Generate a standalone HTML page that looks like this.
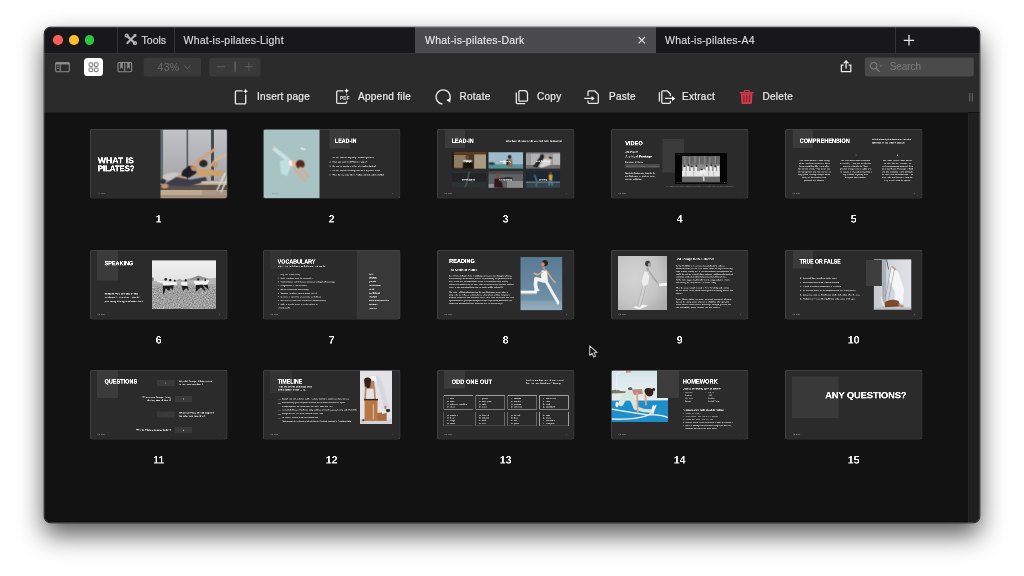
<!DOCTYPE html>
<html lang="en">
<head>
<meta charset="utf-8">
<title>What-is-pilates-Dark</title>
<style>
*{box-sizing:border-box;margin:0;padding:0}
html,body{width:1024px;height:576px;overflow:hidden;background:#fff}
body{font-family:"Liberation Sans",sans-serif;position:relative;color:#e4e4e4}
.win{position:absolute;left:44px;top:27px;width:936px;height:496px;border-radius:7px;will-change:transform;background:#121212;
 box-shadow:0 0 0 .5px rgba(0,0,0,.5),0 12px 26px rgba(0,0,0,.65),0 0 4px rgba(0,0,0,.1);}
.clip{position:absolute;inset:0;border-radius:7px;overflow:hidden}
.edge{position:absolute;inset:0;border-radius:7px;box-shadow:inset 0 0 0 .7px rgba(255,255,255,.2);pointer-events:none}
.titlebar{position:absolute;left:0;top:0;width:936px;height:25.6px;background:#18171c}
.tl{position:absolute;top:8.2px;width:9.7px;height:9.7px;border-radius:50%}
.vdiv{position:absolute;top:0;width:1px;height:26px;background:#343437}
.tabtxt{position:absolute;top:7px;-webkit-text-stroke:.15px #dcdcdc;font-size:10.5px;letter-spacing:.22px;color:#dcdcdc;white-space:nowrap;line-height:12px}
.tabactive{position:absolute;left:370.6px;top:0;width:241px;height:26.2px;background:#4b4b4e}
.toolbar{position:absolute;left:0;top:25.6px;width:936px;height:59.9px;background:#2b2b2b;border-top:1px solid #343434}
.tbtn{position:absolute;font-size:10px;letter-spacing:.27px;color:#ececec;white-space:nowrap;line-height:12px;top:64.2px;-webkit-text-stroke:.2px #ececec}
.tinytxt{position:absolute;font-size:4.6px;font-weight:700;color:#e6e6e6;line-height:5px;letter-spacing:.1px;background:#2b2b2b;padding:0 .3px}
.ztxt{position:absolute;font-size:10.5px;color:#6c6c6c;line-height:12px;letter-spacing:.3px}
.stxt{position:absolute;font-size:10px;color:#7c7c7c;line-height:12px;letter-spacing:-.1px}
.content{position:absolute;left:0;top:85px;width:924px;height:411px;background:linear-gradient(#2b2b2b,#2b2b2b) 0 0/100% .5px no-repeat #121212}
.gutter{position:absolute;left:924px;top:85.5px;width:12px;height:411px;background:#1f1f1f;border-left:1px solid #262626}
.thumb{position:absolute;width:560px;height:400px;overflow:hidden;transform:scale(.25);transform-origin:0 0;will-change:transform}
.thumb svg.sl{display:block;text-rendering:geometricPrecision}
</style>
</head>
<body>
<div class="win">
<div class="clip">
 <div class="titlebar">
  <div class="tl" style="left:9.3px;background:#fd5f57"></div>
  <div class="tl" style="left:25px;background:#febc2e"></div>
  <div class="tl" style="left:40.8px;background:#28c840"></div>
  <div class="vdiv" style="left:73px"></div>
  <div class="tabtxt" style="left:97.6px;letter-spacing:0">Tools</div>
  <div class="vdiv" style="left:130px"></div>
  <div class="tabtxt" style="left:139.5px">What-is-pilates-Light</div>
  <div class="tabactive"></div>
  <div class="tabtxt" style="left:381px;color:#f0f0f0">What-is-pilates-Dark</div>
  <div class="tabtxt" style="left:621px">What-is-pilates-A4</div>
  <div class="vdiv" style="left:851px"></div>
 </div>
 <div class="toolbar"></div>
 <div class="tbtn" style="left:213px">Insert page</div>
 <div class="tbtn" style="left:314px">Append file</div>
 <div class="tbtn" style="left:415.5px">Rotate</div>
 <div class="tbtn" style="left:493px">Copy</div>
 <div class="tbtn" style="left:565px">Paste</div>
 <div class="tbtn" style="left:638px">Extract</div>
 <div class="tbtn" style="left:718.5px">Delete</div>
<svg style="position:absolute;left:0;top:0" width="936" height="90" viewBox="44 27 936 90" fill="none">
 <!-- tools icon -->
 <g stroke="#b4b4b6" stroke-linecap="round">
  <path d="M127.3 36.2 L134.6 43" stroke-width="2.3"/>
  <path d="M134.9 35.6 L127.4 42.9" stroke-width="2.1"/>
  <circle cx="126.7" cy="35.7" r="1.5" stroke-width="1.2"/>
  <circle cx="135" cy="43.2" r="1.5" stroke-width="1.2"/>
  <path d="M133.8 34.8 L136 34.4 L135.7 36.6" stroke-width="1"/>
 </g>
 <!-- tab close -->
 <path d="M638.6 37 L645 43.4 M645 37 L638.6 43.4" stroke="#dedede" stroke-width="1.15"/>
 <!-- plus -->
 <path d="M903.8 40.3 H914.2 M909 35.1 V45.5" stroke="#e6e6e6" stroke-width="1.3"/>
 <!-- sidebar icon -->
 <g stroke="#8b8b8b">
  <rect x="55.7" y="62.5" width="13.6" height="9.2" rx="1" stroke-width="1.1"/>
  <path d="M55.7 63.6 H69.3" stroke-width="1.6"/>
  <path d="M60.2 63 V71.5" stroke-width="1.1"/>
  <path d="M57 66.2 H59 M57 68.3 H59" stroke-width=".8"/>
 </g>
 <!-- grid button -->
 <rect x="84" y="58" width="19" height="18" rx="3.6" fill="#fff"/>
 <g stroke="#707070" stroke-width="1">
  <rect x="89.1" y="62.8" width="3.6" height="3.6" rx=".6"/>
  <rect x="94.4" y="62.8" width="3.6" height="3.6" rx=".6"/>
  <rect x="89.1" y="68" width="3.6" height="3.6" rx=".6"/>
  <rect x="94.4" y="68" width="3.6" height="3.6" rx=".6"/>
 </g>
 <!-- book icon -->
 <g stroke="#8b8b8b" stroke-width="1.1">
  <rect x="118" y="62.5" width="13.6" height="9.2" rx="1"/>
  <path d="M124.8 62.5 V71.7"/>
  <path d="M120.3 63 V68.5 L121.4 67.6 L122.5 68.5 V63 Z" fill="#8b8b8b" stroke-width=".5"/>
  <path d="M127.3 63 V68.5 L128.4 67.6 L129.5 68.5 V63 Z" fill="#8b8b8b" stroke-width=".5"/>
 </g>
 <!-- zoom box -->
 <rect x="143.7" y="57.8" width="57.4" height="18.6" rx="2.5" fill="#393939"/>
 <path d="M184.5 65.6 L187.3 68.8 L190.1 65.6" stroke="#626262" stroke-width="1"/>
 <rect x="209.3" y="57.8" width="51.2" height="18.6" rx="2.5" fill="#393939"/>
 <path d="M216.8 66.6 H225 M244.7 66.6 H252.9 M248.8 62.5 V70.7" stroke="#565656" stroke-width="1.1"/>
 <path d="M235.1 61.6 V71.8" stroke="#6c6c6c" stroke-width="1.1"/>
 <!-- share -->
 <g stroke="#ededed" stroke-width="1.25">
  <path d="M843.6 65 H841.4 V71.7 H850.8 V65 H848.6"/>
  <path d="M846.1 68.6 V61.2 M843.7 63.4 L846.1 61 L848.5 63.4"/>
 </g>
 <!-- search -->
 <rect x="864.8" y="57.6" width="109" height="19" rx="3" fill="#4a4a4a"/>
 <circle cx="873.7" cy="65.8" r="3.4" stroke="#858585" stroke-width="1"/>
 <path d="M876.2 68.4 L879.6 71.8" stroke="#858585" stroke-width="1.1"/>
 <path d="M879.6 65 L881 66.4 L882.4 65" stroke="#858585" stroke-width=".8"/>
 <!-- grip -->
 <path d="M969.7 93 V101.5 M972.3 93 V101.5" stroke="#777" stroke-width=".8"/>
 <!-- insert page -->
 <g stroke="#ececec" stroke-width="1.3" stroke-linejoin="round">
  <path d="M242.6 90.9 H236.4 Q235.4 90.9 235.4 91.9 V102.9 Q235.4 103.9 236.4 103.9 H244.7 Q245.7 103.9 245.7 102.9 V94.6"/>
  <path d="M245.6 88.6 L246.3 90.5 L248.2 91.2 L246.3 91.9 L245.6 93.8 L244.9 91.9 L243 91.2 L244.9 90.5 Z" fill="#fff" stroke="none"/>
 </g>
 <!-- append file -->
 <g stroke="#e4e4e4" stroke-width="1.3" stroke-linejoin="round">
  <path d="M343.4 90.8 H337.7 Q336.7 90.8 336.7 91.8 V102.3 Q336.7 103.3 337.7 103.3 H345.6 Q346.6 103.3 346.6 102.3 V101.2"/>
  <path d="M346.6 88.2 L347.3 90.1 L349.2 90.8 L347.3 91.5 L346.6 93.4 L345.9 91.5 L344 90.8 L345.9 90.1 Z" fill="#fff" stroke="none"/>
  <path d="M346.6 94.2 V95.4" stroke-width="1"/>
 </g>
 <!-- rotate -->
 <g stroke="#ececec" stroke-width="1.35" stroke-linecap="butt">
  <path d="M442.4 104 A7.1 7.1 0 1 1 449.2 100.6"/>
  <path d="M446.3 100 L450.3 102.8 L450.4 98.2 Z" fill="#fff" stroke="none"/>
 </g>
 <!-- copy -->
 <g stroke="#e8e8e8" stroke-width="1.3" stroke-linejoin="round">
  <path d="M519.9 90.6 H524.6 Q527.4 90.9 527.5 93.6 V100.2 Q527.5 101.2 526.5 101.2 H519.9 Q518.9 101.2 518.9 100.2 V91.6 Q518.9 90.6 519.9 90.6 Z"/>
  <path d="M516.3 92.6 V102.6 Q516.3 103.6 517.3 103.6 H525.2"/>
 </g>
 <!-- paste -->
 <g stroke="#e8e8e8" stroke-width="1.3" stroke-linejoin="round">
  <path d="M588 96 V91.8 Q588 90.8 589 90.8 H594.6 L598.3 94.4 V102.3 Q598.3 103.3 597.3 103.3 H589 Q588 103.3 588 102.3 V100.6"/>
  <path d="M584.2 98.4 H592.5"/>
  <path d="M591.6 96 L594.7 98.4 L591.6 100.8 Z" fill="#fff" stroke="none"/>
 </g>
 <!-- extract -->
 <g stroke="#e8e8e8" stroke-width="1.3" stroke-linejoin="round">
  <path d="M659.4 92.2 V101.6"/>
  <path d="M670.4 96 V94 L667.1 90.8 H662.8 Q661.8 90.8 661.8 91.8 V102.3 Q661.8 103.3 662.8 103.3 H669.4 Q670.4 103.3 670.4 102.3 V100.8"/>
  <path d="M665 98.4 H673"/>
  <path d="M672 95.9 L675.3 98.4 L672 100.9 Z" fill="#fff" stroke="none"/>
 </g>
 <!-- delete -->
 <g fill="#cf3a4b">
  <rect x="739.8" y="91.9" width="13.8" height="1.5" rx=".4"/>
  <path d="M743.9 92 V91 Q743.9 90 744.9 90 H748.9 Q749.9 90 749.9 91 V92 H748.7 V91.1 H745.1 V92 Z"/>
  <path d="M740.9 93.6 H752.4 L751.9 103 Q751.8 103.9 750.9 103.9 H742.4 Q741.5 103.9 741.4 103 Z"/>
  <path d="M743.9 95.2 V102.2 M746.65 95.2 V102.2 M749.4 95.2 V102.2" stroke="#7a1f2c" stroke-width="1.1"/>
 </g>
</svg>
<div class="tinytxt" style="left:295.8px;top:69.1px">PDF</div>
<div class="ztxt" style="left:113.5px;top:33.6px">43%</div>
<div class="stxt" style="left:845.8px;top:34.2px">Search</div>
 <div class="content" id="content">
<svg width="0" height="0" style="position:absolute"><defs><filter id="bl1" x="-10%" y="-10%" width="120%" height="120%"><feGaussianBlur stdDeviation="1.1"/></filter><filter id="bl2" x="-10%" y="-10%" width="120%" height="120%"><feGaussianBlur stdDeviation="2"/></filter><filter id="bl3" x="-10%" y="-10%" width="120%" height="120%"><feGaussianBlur stdDeviation="4.5"/></filter><clipPath id="cp"><rect x="0" y="0" width="549.2" height="277.6" rx="8"/></clipPath></defs></svg>
<div class="thumb" style="left:45.50px;top:17.05px"><svg class="sl" width="560" height="400" viewBox="0 0 560 400" font-family="Liberation Sans, sans-serif"><g clip-path="url(#cp)"><rect x="0.0" y="0.0" width="552.0" height="280.0" fill="#2b2b2b"/><svg x="282.0" y="0.0" width="270.0" height="280.0" viewBox="35 30 485 500" preserveAspectRatio="none" overflow="hidden"><defs><linearGradient id="g1a" x1="0" y1="0" x2="0" y2="1"><stop offset="0" stop-color="#c0c3c7"/><stop offset=".7" stop-color="#a9a9ab"/><stop offset="1" stop-color="#9c968f"/></linearGradient></defs>
<rect x="35" y="30" width="485" height="500" fill="url(#g1a)"/>
<rect x="35" y="30" width="20" height="370" fill="#666c73"/><ellipse cx="130" cy="372" rx="80" ry="30" fill="#c9c7c3" filter="url(#bl3)"/>
<rect x="222" y="30" width="13" height="370" fill="#555c63"/>
<rect x="396" y="30" width="22" height="370" fill="#434a52"/>
<rect x="35" y="398" width="485" height="132" fill="#ab9884"/>
<rect x="35" y="432" width="485" height="34" fill="#5a514a"/>
<rect x="35" y="466" width="300" height="34" fill="#c0ab92"/>
<rect x="35" y="500" width="485" height="30" fill="#a28d78"/>
<g filter="url(#bl3)">
<path d="M420 178 L300 262 L262 300" stroke="#d6a07e" stroke-width="20" stroke-linecap="round" fill="none"/>
<path d="M500 212 L420 262 L390 300" stroke="#e0b28e" stroke-width="15" stroke-linecap="round" fill="none"/>
<ellipse cx="428" cy="283" rx="20" ry="22" fill="#c39872"/>
<path d="M300 318 L400 318 L500 338 L500 362 L300 368 Z" fill="#cfa069"/>
<ellipse cx="343" cy="276" rx="30" ry="26" fill="#2c2622"/>
<path d="M196 326 L240 292 L300 300 L292 346 L240 378 L180 366 Z" fill="#1b1c20"/><path d="M250 300 L300 296 L296 330 L262 326 Z" fill="#c8916f"/>
<path d="M165 352 L235 392 L215 410 L150 392 Z" fill="#c99a7c"/>
<path d="M150 372 L250 392 L360 372 L370 400 L240 440 L110 436 L70 420 Z" fill="#3a3e49"/>
<ellipse cx="66" cy="440" rx="26" ry="14" fill="#c79474"/>
<ellipse cx="52" cy="405" rx="22" ry="18" fill="#30333b"/>
<path d="M440 470 L500 345 M470 480 L520 370" stroke="#e8e6e2" stroke-width="10" fill="none"/>
<rect x="330" y="405" width="190" height="14" fill="#d8cfc2"/>
</g></svg><text x="31.2" y="137.4" font-size="33" font-weight="700" fill="#fff" textLength="144.0" lengthAdjust="spacingAndGlyphs" stroke="#fff" stroke-width="1.4">WHAT IS</text><text x="31.2" y="168.6" font-size="33" font-weight="700" fill="#fff" textLength="147.0" lengthAdjust="spacingAndGlyphs" stroke="#fff" stroke-width="1.4">PILATES?</text><text x="31.0" y="260.0" font-size="5" font-weight="400" fill="#bdbdbd" textLength="28.0" lengthAdjust="spacingAndGlyphs">ESL Brains</text></g><rect x="1.3" y="1.3" width="546.6" height="275.0" rx="7" fill="none" stroke="#474747" stroke-width="2.6"/><text x="274.6" y="373.6" font-size="42.5" font-weight="700" fill="#f4f4f4" text-anchor="middle">1</text></svg></div>
<div class="thumb" style="left:218.75px;top:17.05px"><svg class="sl" width="560" height="400" viewBox="0 0 560 400" font-family="Liberation Sans, sans-serif"><g clip-path="url(#cp)"><rect x="0.0" y="0.0" width="552.0" height="280.0" fill="#2b2b2b"/><rect x="266.0" y="0.0" width="82.0" height="78.0" fill="#3b3b3b"/><svg x="0.0" y="0.0" width="226.0" height="280.0" viewBox="45 48 385 475" preserveAspectRatio="none" overflow="hidden"><rect x="45" y="48" width="390" height="480" fill="#a8c3c3"/>
<g filter="url(#bl3)">
<path d="M118 180 L190 237 L228 268" stroke="#c6e4e4" stroke-width="27" stroke-linecap="round" fill="none"/>
<ellipse cx="110" cy="176" rx="10" ry="7" fill="#e0a890"/>
<path d="M158 268 L215 246 L238 300 L208 368 L168 350 Z" fill="#bfe0e0"/>
<path d="M215 258 L270 262 L285 300 L230 312 Z" fill="#e6b9a0"/>
<rect x="222" y="262" width="20" height="36" fill="#f2f4f4" transform="rotate(-12 232 280)"/>
<ellipse cx="298" cy="287" rx="31" ry="29" fill="#54291f"/>
<path d="M300 312 L350 368 M262 322 L330 398" stroke="#e0a88c" stroke-width="15" stroke-linecap="round" fill="none"/>
<path d="M300 172 L340 180 L334 194 L296 186 Z" fill="#eef3f3" stroke="#8da4a4" stroke-width="3"/>
</g></svg><text x="288.0" y="55.0" font-size="24" font-weight="700" fill="#fff" textLength="86.0" lengthAdjust="spacingAndGlyphs" stroke="#fff" stroke-width="1.1" stroke-linejoin="round">LEAD-IN</text><text x="266.0" y="116.5" font-size="7.5" font-weight="700" fill="#e9e9e9">1.</text><text x="266.0" y="133.9" font-size="7.5" font-weight="700" fill="#e9e9e9">2.</text><text x="266.0" y="151.3" font-size="7.5" font-weight="700" fill="#e9e9e9">3.</text><text x="266.0" y="168.7" font-size="7.5" font-weight="700" fill="#e9e9e9">4.</text><text x="266.0" y="186.1" font-size="7.5" font-weight="700" fill="#e9e9e9">5.</text><text x="278.0" y="116.5" font-size="7.5" font-weight="700" fill="#e9e9e9" textLength="165.0" lengthAdjust="spacingAndGlyphs">Do you exercise regularly? What do you do?</text><text x="278.0" y="133.9" font-size="7.5" font-weight="700" fill="#e9e9e9" textLength="137.0" lengthAdjust="spacingAndGlyphs">Have you ever tried Pilates or yoga?</text><text x="278.0" y="151.3" font-size="7.5" font-weight="700" fill="#e9e9e9" textLength="175.0" lengthAdjust="spacingAndGlyphs">Do you do sports or other physical activities?</text><text x="278.0" y="168.7" font-size="7.5" font-weight="700" fill="#e9e9e9" textLength="190.0" lengthAdjust="spacingAndGlyphs">Do you enjoy exercising alone or in a group? Why?</text><text x="278.0" y="186.1" font-size="7.5" font-weight="700" fill="#e9e9e9" textLength="206.0" lengthAdjust="spacingAndGlyphs">What do you know about Pilates and its health benefits?</text><text x="36.0" y="259.0" font-size="5" font-weight="400" fill="#6d8585" textLength="27.0" lengthAdjust="spacingAndGlyphs">ESL Brains</text><text x="521.0" y="261.0" font-size="6" font-weight="400" fill="#cfcfcf" text-anchor="end">2</text></g><rect x="1.3" y="1.3" width="546.6" height="275.0" rx="7" fill="none" stroke="#474747" stroke-width="2.6"/><text x="274.6" y="373.6" font-size="42.5" font-weight="700" fill="#f4f4f4" text-anchor="middle">2</text></svg></div>
<div class="thumb" style="left:392.75px;top:17.05px"><svg class="sl" width="560" height="400" viewBox="0 0 560 400" font-family="Liberation Sans, sans-serif"><g clip-path="url(#cp)"><rect x="0.0" y="0.0" width="552.0" height="280.0" fill="#2b2b2b"/><rect x="32.0" y="0.0" width="80.0" height="76.0" fill="#3b3b3b"/><text x="58.6" y="55.0" font-size="24" font-weight="700" fill="#fff" textLength="88.0" lengthAdjust="spacingAndGlyphs" stroke="#fff" stroke-width="1.1" stroke-linejoin="round">LEAD-IN</text><text x="275.0" y="51.0" font-size="9.5" font-weight="700" fill="#fff" textLength="226.0" lengthAdjust="spacingAndGlyphs">What type of exercise do you find most appealing?</text><svg x="58.6" y="93.0" width="137.0" height="65.5" viewBox="0 0 136 66" preserveAspectRatio="none" overflow="hidden"><rect width="136" height="66" fill="#4a3624"/><rect x="10" y="12" width="46" height="50" fill="#8f7a62"/><rect x="90" y="8" width="46" height="58" fill="#ab9a82"/><rect x="0" y="0" width="136" height="9" fill="#5e3d1c"/><rect x="0" y="0" width="8" height="66" fill="#241a12"/><g filter="url(#bl2)"><path d="M44 66 L46 36 L62 28 L82 36 L86 66 Z" fill="#141210"/><ellipse cx="62" cy="20" rx="8" ry="9" fill="#6a4a36"/><rect x="46" y="32" width="34" height="6" fill="#e8e8e8"/></g></svg><text x="126.6" y="132.0" font-size="9.5" font-weight="700" fill="#fff" text-anchor="middle">yoga</text><svg x="206.0" y="93.0" width="137.0" height="65.5" viewBox="0 0 136 66" preserveAspectRatio="none" overflow="hidden"><rect width="136" height="66" fill="#9cbccc"/><rect y="52" width="136" height="14" fill="#4f9595"/><rect y="47" width="136" height="6" fill="#6f98a4"/><g filter="url(#bl2)"><ellipse cx="12" cy="46" rx="14" ry="6" fill="#2f3e48"/><ellipse cx="84" cy="19" rx="7" ry="8" fill="#2b201a"/><path d="M78 28 L94 28 L96 60 L80 60 Z" fill="#8a6a58"/><path d="M58 34 L78 32 L78 48 L60 46 Z" fill="#eaeaea"/><rect x="70" y="30" width="10" height="22" fill="#1b1b1f"/></g></svg><text x="274.0" y="132.0" font-size="9.5" font-weight="700" fill="#fff" text-anchor="middle">swimming</text><svg x="355.7" y="93.0" width="137.0" height="65.5" viewBox="0 0 136 66" preserveAspectRatio="none" overflow="hidden"><rect width="136" height="66" fill="#9a9a9c"/><rect x="20" y="4" width="36" height="46" fill="#b2b2b4"/><rect x="108" y="4" width="28" height="46" fill="#b6b6b8"/><rect x="0" y="0" width="136" height="5" fill="#6e6e70"/><rect y="52" width="136" height="14" fill="#6e6e70"/><g filter="url(#bl2)"><path d="M28 58 L56 18 L72 22 L46 62 Z" fill="#26262a"/><path d="M50 58 L74 26 L100 30 L96 52 L62 62 Z" fill="#d8d8d8"/><ellipse cx="64" cy="16" rx="8" ry="8" fill="#2a2420"/><ellipse cx="84" cy="20" rx="7" ry="7" fill="#caa98e"/><path d="M90 20 L104 24" stroke="#222" stroke-width="6"/></g></svg><text x="423.7" y="132.0" font-size="9.5" font-weight="700" fill="#fff" text-anchor="middle">weightlifting</text><svg x="58.6" y="169.3" width="137.0" height="65.5" viewBox="0 0 136 66" preserveAspectRatio="none" overflow="hidden"><rect width="136" height="66" fill="#222425"/><rect x="0" y="42" width="136" height="24" fill="#2e3132"/><rect x="0" y="0" width="136" height="8" fill="#2c3030"/><g filter="url(#bl2)"><path d="M70 2 L62 40 L54 64" stroke="#5a6062" stroke-width="5" fill="none"/><path d="M64 30 L84 44" stroke="#4b5052" stroke-width="4"/></g></svg><text x="126.6" y="206.4" font-size="9.5" font-weight="700" fill="#fff" text-anchor="middle">gymnastics</text><svg x="206.0" y="169.3" width="137.0" height="65.5" viewBox="0 0 136 66" preserveAspectRatio="none" overflow="hidden"><rect width="136" height="66" fill="#5e6062"/><rect x="0" y="0" width="136" height="12" fill="#46484a"/><rect x="74" y="40" width="62" height="26" fill="#8a8c8e"/><rect x="0" y="50" width="36" height="16" fill="#909294"/><g filter="url(#bl2)"><ellipse cx="36" cy="18" rx="8" ry="9" fill="#7a4f3c"/><path d="M24 30 L48 28 L58 66 L22 66 Z" fill="#33191f"/><path d="M44 34 L78 28 L92 30" stroke="#1d1d20" stroke-width="8" fill="none" stroke-linecap="round"/></g></svg><text x="274.0" y="206.4" font-size="9.5" font-weight="700" fill="#fff" text-anchor="middle">kickboxing</text><svg x="355.7" y="169.3" width="137.0" height="65.5" viewBox="0 0 136 66" preserveAspectRatio="none" overflow="hidden"><rect width="136" height="66" fill="#1b2832"/><rect x="0" y="46" width="136" height="20" fill="#34444f"/><rect x="0" y="41" width="136" height="5" fill="#64747d"/><g filter="url(#bl2)"><path d="M34 14 L44 42 L40 62" stroke="#4c6c7a" stroke-width="7" fill="none"/><ellipse cx="98" cy="8" rx="5" ry="6" fill="#6a4a38"/><path d="M90 14 L106 14 L104 36 L92 36 Z" fill="#d9a22e"/><path d="M94 36 L92 58 M102 36 L104 58" stroke="#5a8a9a" stroke-width="5"/></g></svg><text x="423.7" y="206.4" font-size="9.5" font-weight="700" fill="#fff" text-anchor="middle">cycling</text><text x="30.0" y="259.0" font-size="5" font-weight="400" fill="#bdbdbd" textLength="30.0" lengthAdjust="spacingAndGlyphs">ESL Brains</text><text x="521.0" y="261.0" font-size="6" font-weight="400" fill="#cfcfcf" text-anchor="end">3</text></g><rect x="1.3" y="1.3" width="546.6" height="275.0" rx="7" fill="none" stroke="#474747" stroke-width="2.6"/><text x="274.6" y="373.6" font-size="42.5" font-weight="700" fill="#f4f4f4" text-anchor="middle">3</text></svg></div>
<div class="thumb" style="left:566.95px;top:17.05px"><svg class="sl" width="560" height="400" viewBox="0 0 560 400" font-family="Liberation Sans, sans-serif"><g clip-path="url(#cp)"><rect x="0.0" y="0.0" width="552.0" height="280.0" fill="#2b2b2b"/><rect x="206.0" y="41.0" width="85.0" height="133.0" fill="#3b3b3b"/><text x="57.0" y="64.5" font-size="23" font-weight="700" fill="#fff" textLength="70.0" lengthAdjust="spacingAndGlyphs" stroke="#fff" stroke-width="1.1" stroke-linejoin="round">VIDEO</text><text x="57.0" y="96.0" font-size="12.5" font-weight="700" fill="#fff" textLength="52.0" lengthAdjust="spacingAndGlyphs">Joe Pilates</text><text x="57.0" y="113.5" font-size="12.5" font-weight="700" fill="#fff" textLength="106.0" lengthAdjust="spacingAndGlyphs">Archival Footage</text><text x="57.0" y="135.0" font-size="8" font-weight="700" fill="#f0f0f0" textLength="70.0" lengthAdjust="spacingAndGlyphs">Duration: 1:05 min</text><rect x="57.0" y="140.6" width="137.5" height="14.0" fill="#4b4b4b"/><text x="60.0" y="150.5" font-size="5.6" font-weight="400" fill="#8e8e8e" textLength="131.0" lengthAdjust="spacingAndGlyphs">www.youtube.com/watch?v=jyd8ucBdcPg</text><text x="57.0" y="178.5" font-size="8" font-weight="700" fill="#f2f2f2" textLength="121.0" lengthAdjust="spacingAndGlyphs">Watch the footage and describe the</text><text x="57.0" y="190.7" font-size="8" font-weight="700" fill="#f2f2f2" textLength="118.0" lengthAdjust="spacingAndGlyphs">way Pilates and his students move,</text><text x="57.0" y="202.9" font-size="8" font-weight="700" fill="#f2f2f2" textLength="68.0" lengthAdjust="spacingAndGlyphs">exercise, and behave.</text><rect x="255.0" y="96.7" width="208.0" height="122.3" fill="#050505"/><svg x="283.6" y="107.8" width="151.4" height="104.2" viewBox="0 0 152 104" preserveAspectRatio="none" overflow="hidden"><rect width="152" height="104" fill="#686868"/>
<g filter="url(#bl1)"><rect x="0" y="0" width="152" height="36" fill="#676767"/>
<path d="M12 0 V34 M30 4 V34 M52 0 V30 M70 6 V34 M92 0 V32 M112 4 V34 M134 0 V30" stroke="#868686" stroke-width="5"/>
<path d="M40 0 V20 M102 0 V24" stroke="#555" stroke-width="4"/>
<rect x="0" y="34" width="152" height="26" fill="#8e8e8e"/>
<path d="M10 40 V62 M24 38 V62 M40 42 V62 M56 40 V62 M100 40 V62 M116 38 V62 M132 42 V62 M146 40 V62" stroke="#ececec" stroke-width="9"/>
<path d="M10 36 a4.5 4.5 0 1 0 .1 0 M26 33 a4.5 4.5 0 1 0 .1 0 M40 37 a4.5 4.5 0 1 0 .1 0 M58 35 a4.5 4.5 0 1 0 .1 0 M100 35 a4.5 4.5 0 1 0 .1 0 M118 33 a4.5 4.5 0 1 0 .1 0 M134 37 a4.5 4.5 0 1 0 .1 0" fill="#353535"/>
<rect x="0" y="60" width="152" height="22" fill="#e6e6e6"/>
<path d="M16 62 V80 M48 62 V80 M108 62 V80 M128 62 V80" stroke="#a8a8a8" stroke-width="3"/>
<ellipse cx="84" cy="62" rx="11" ry="10" fill="#f0f0f0"/><ellipse cx="80" cy="54" rx="5" ry="4" fill="#444"/>
<rect x="0" y="82" width="152" height="22" fill="#666"/>
<path d="M86 70 L88 100" stroke="#cfcfcf" stroke-width="6" fill="none"/>
</g></svg><text x="260.0" y="105.0" font-size="4.5" font-weight="400" fill="#8a8a8a" textLength="60.0" lengthAdjust="spacingAndGlyphs">Joe Pilates Archival Footage</text><path d="M259 214.5 h2.6 M265 214.5 h2.6" stroke="#c33" stroke-width="1.6"/><path d="M270 214.5 H440" stroke="#444" stroke-width="1"/><path d="M446 214.5 h3 M452 214.5 h3 M458 214.5 h2" stroke="#888" stroke-width="1.4"/><text x="221.0" y="230.5" font-size="5.5" font-weight="400" fill="#8a8a8a" textLength="269.0" lengthAdjust="spacingAndGlyphs">Joe Pilates Archival Footage, uploaded by Pilates Anytime, YouTube, www.youtube.com/watch?v=jyd8ucBdcPg</text><text x="30.0" y="259.0" font-size="5" font-weight="400" fill="#bdbdbd" textLength="30.0" lengthAdjust="spacingAndGlyphs">ESL Brains</text><text x="521.0" y="261.0" font-size="6" font-weight="400" fill="#cfcfcf" text-anchor="end">4</text></g><rect x="1.3" y="1.3" width="546.6" height="275.0" rx="7" fill="none" stroke="#474747" stroke-width="2.6"/><text x="274.6" y="373.6" font-size="42.5" font-weight="700" fill="#f4f4f4" text-anchor="middle">4</text></svg></div>
<div class="thumb" style="left:740.60px;top:17.05px"><svg class="sl" width="560" height="400" viewBox="0 0 560 400" font-family="Liberation Sans, sans-serif"><g clip-path="url(#cp)"><rect x="0.0" y="0.0" width="552.0" height="280.0" fill="#2b2b2b"/><rect x="30.5" y="0.0" width="82.0" height="76.0" fill="#3b3b3b"/><text x="58.6" y="55.0" font-size="24" font-weight="700" fill="#fff" textLength="200.5" lengthAdjust="spacingAndGlyphs" stroke="#fff" stroke-width="1.1" stroke-linejoin="round">COMPREHENSION</text><text x="347.0" y="44.5" font-size="9" font-weight="700" fill="#fff" textLength="156.0" lengthAdjust="spacingAndGlyphs">Which description best matches the</text><text x="347.0" y="57.5" font-size="9" font-weight="700" fill="#fff" textLength="134.0" lengthAdjust="spacingAndGlyphs">activities in the video? Explain.</text><text x="116.0" y="109.0" font-size="9.5" font-weight="700" fill="#fff" text-anchor="middle">1</text><text x="284.0" y="109.0" font-size="9.5" font-weight="700" fill="#fff" text-anchor="middle">2</text><text x="450.0" y="109.0" font-size="9.5" font-weight="700" fill="#fff" text-anchor="middle">3</text><text x="117.5" y="128.5" font-size="7.6" font-weight="700" fill="#e8e8e8" text-anchor="middle" textLength="122.0" lengthAdjust="spacingAndGlyphs">This video shows a man doing</text><text x="117.5" y="139.8" font-size="7.6" font-weight="700" fill="#e8e8e8" text-anchor="middle" textLength="123.0" lengthAdjust="spacingAndGlyphs">slow, careful movements. They</text><text x="117.5" y="151.1" font-size="7.6" font-weight="700" fill="#e8e8e8" text-anchor="middle" textLength="120.0" lengthAdjust="spacingAndGlyphs">look repetitive. He is on what</text><text x="117.5" y="162.4" font-size="7.6" font-weight="700" fill="#e8e8e8" text-anchor="middle" textLength="128.0" lengthAdjust="spacingAndGlyphs">looks like a bed. They don’t use</text><text x="117.5" y="173.7" font-size="7.6" font-weight="700" fill="#e8e8e8" text-anchor="middle" textLength="131.0" lengthAdjust="spacingAndGlyphs">any equipment and the exercise is</text><text x="117.5" y="185.0" font-size="7.6" font-weight="700" fill="#e8e8e8" text-anchor="middle" textLength="129.0" lengthAdjust="spacingAndGlyphs">very gentle, relaxing and light-paced.</text><text x="117.5" y="196.3" font-size="7.6" font-weight="700" fill="#e8e8e8" text-anchor="middle" textLength="96.0" lengthAdjust="spacingAndGlyphs">Many of the students are</text><text x="117.5" y="207.6" font-size="7.6" font-weight="700" fill="#e8e8e8" text-anchor="middle" textLength="82.0" lengthAdjust="spacingAndGlyphs">professional athletes.</text><text x="283.0" y="128.5" font-size="7.6" font-weight="700" fill="#e8e8e8" text-anchor="middle" textLength="117.0" lengthAdjust="spacingAndGlyphs">The video shows men and women</text><text x="283.0" y="139.8" font-size="7.6" font-weight="700" fill="#e8e8e8" text-anchor="middle" textLength="124.0" lengthAdjust="spacingAndGlyphs">exercising. They use a variety of</text><text x="283.0" y="151.1" font-size="7.6" font-weight="700" fill="#e8e8e8" text-anchor="middle" textLength="100.0" lengthAdjust="spacingAndGlyphs">machines. Outside, Mr Pilates</text><text x="283.0" y="162.4" font-size="7.6" font-weight="700" fill="#e8e8e8" text-anchor="middle" textLength="126.0" lengthAdjust="spacingAndGlyphs">guides a large class outdoors.</text><text x="283.0" y="173.7" font-size="7.6" font-weight="700" fill="#e8e8e8" text-anchor="middle" textLength="129.0" lengthAdjust="spacingAndGlyphs">He moves a lot, and instructing a</text><text x="283.0" y="185.0" font-size="7.6" font-weight="700" fill="#e8e8e8" text-anchor="middle" textLength="100.0" lengthAdjust="spacingAndGlyphs">big number of young men.</text><text x="283.0" y="196.3" font-size="7.6" font-weight="700" fill="#e8e8e8" text-anchor="middle" textLength="84.0" lengthAdjust="spacingAndGlyphs">Everyone looks serious.</text><text x="449.5" y="128.5" font-size="7.6" font-weight="700" fill="#e8e8e8" text-anchor="middle" textLength="116.0" lengthAdjust="spacingAndGlyphs">The video shows a man who is</text><text x="449.5" y="139.8" font-size="7.6" font-weight="700" fill="#e8e8e8" text-anchor="middle" textLength="110.0" lengthAdjust="spacingAndGlyphs">very flexible and stronger. He</text><text x="449.5" y="151.1" font-size="7.6" font-weight="700" fill="#e8e8e8" text-anchor="middle" textLength="124.0" lengthAdjust="spacingAndGlyphs">works on an apparatus and then</text><text x="449.5" y="162.4" font-size="7.6" font-weight="700" fill="#e8e8e8" text-anchor="middle" textLength="123.0" lengthAdjust="spacingAndGlyphs">on a bed-base. The pace is fast</text><text x="449.5" y="173.7" font-size="7.6" font-weight="700" fill="#e8e8e8" text-anchor="middle" textLength="126.0" lengthAdjust="spacingAndGlyphs">and the exercise looks difficult.</text><text x="449.5" y="185.0" font-size="7.6" font-weight="700" fill="#e8e8e8" text-anchor="middle" textLength="125.0" lengthAdjust="spacingAndGlyphs">He works out and stretches. The</text><text x="449.5" y="196.3" font-size="7.6" font-weight="700" fill="#e8e8e8" text-anchor="middle" textLength="121.0" lengthAdjust="spacingAndGlyphs">man talks and instructs how the</text><text x="449.5" y="207.6" font-size="7.6" font-weight="700" fill="#e8e8e8" text-anchor="middle" textLength="109.0" lengthAdjust="spacingAndGlyphs">body should work the system.</text><text x="30.0" y="259.0" font-size="5" font-weight="400" fill="#bdbdbd" textLength="30.0" lengthAdjust="spacingAndGlyphs">ESL Brains</text><text x="521.0" y="261.0" font-size="6" font-weight="400" fill="#cfcfcf" text-anchor="end">5</text></g><rect x="1.3" y="1.3" width="546.6" height="275.0" rx="7" fill="none" stroke="#474747" stroke-width="2.6"/><text x="274.6" y="373.6" font-size="42.5" font-weight="700" fill="#f4f4f4" text-anchor="middle">5</text></svg></div>
<div class="thumb" style="left:45.50px;top:137.75px"><svg class="sl" width="560" height="400" viewBox="0 0 560 400" font-family="Liberation Sans, sans-serif"><g clip-path="url(#cp)"><rect x="0.0" y="0.0" width="552.0" height="280.0" fill="#2b2b2b"/><rect x="29.0" y="0.0" width="82.0" height="122.0" fill="#3b3b3b"/><text x="58.0" y="61.0" font-size="24" font-weight="700" fill="#fff" textLength="115.0" lengthAdjust="spacingAndGlyphs" stroke="#fff" stroke-width="1.1" stroke-linejoin="round">SPEAKING</text><text x="58.0" y="177.5" font-size="9.5" font-weight="700" fill="#fff" textLength="135.0" lengthAdjust="spacingAndGlyphs">Imagine you are one of the</text><text x="58.0" y="193.0" font-size="9.5" font-weight="700" fill="#fff" textLength="140.0" lengthAdjust="spacingAndGlyphs">students in the video. Would</text><text x="58.0" y="208.5" font-size="9.5" font-weight="700" fill="#fff" textLength="154.0" lengthAdjust="spacingAndGlyphs">you enjoy this type of exercise?</text><svg x="247.0" y="41.6" width="258.0" height="194.4" viewBox="0 0 258 194" preserveAspectRatio="none" overflow="hidden"><defs><linearGradient id="g6" x1="0" y1="0" x2="0" y2="1"><stop offset="0" stop-color="#f2f2f2"/><stop offset=".4" stop-color="#e4e4e4"/><stop offset=".5" stop-color="#b0b0b0"/><stop offset="1" stop-color="#a4a4a4"/></linearGradient>
<filter id="nz" x="0" y="0" width="100%" height="100%" color-interpolation-filters="sRGB"><feTurbulence type="fractalNoise" baseFrequency=".2" numOctaves="2" seed="7" result="t"/><feColorMatrix in="t" type="matrix" values=".6 0 0 0 .32  .6 0 0 0 .32  .6 0 0 0 .32  0 0 0 0 1"/></filter></defs>
<rect width="258" height="194" fill="url(#g6)"/>
<rect x="0" y="100" width="258" height="94" filter="url(#nz)"/>
<g filter="url(#bl1)">
<path d="M0 84 L40 80 L90 84 L130 78 L150 72 L186 62 L228 72 L258 70 L258 102 L0 102 Z" fill="#b4b4b4"/>
<path d="M146 78 L186 60 L232 76 Z" fill="#909090"/>
<path d="M92 82 L112 74 L130 82 Z" fill="#a0a0a0"/>
<path d="M2 68 a6 8 0 1 0 .1 0" fill="#777"/>
<rect x="0" y="94" width="258" height="10" fill="#a8a8a8"/>
<g fill="#f4f4f4"><path d="M22 80 L50 82 L64 82 L66 100 L46 102 L44 90 L22 86 Z"/><rect x="66" y="84" width="20" height="16"/><rect x="86" y="86" width="14" height="12"/><rect x="118" y="86" width="24" height="16"/><path d="M166 82 L196 82 L228 78 L230 86 L204 96 L176 100 Z"/><rect x="206" y="84" width="18" height="14"/></g>
<g fill="#1e1e1e"><ellipse cx="56" cy="76" rx="5.5" ry="5.5"/><ellipse cx="74" cy="79" rx="5" ry="5"/><ellipse cx="92" cy="81" rx="4" ry="4"/><ellipse cx="136" cy="80" rx="5" ry="5"/><ellipse cx="186" cy="76" rx="5" ry="5"/><ellipse cx="214" cy="79" rx="4" ry="4"/>
<path d="M44 100 L66 100 L72 118 L64 120 L56 110 L50 132 L45 132 Z"/><path d="M66 100 L88 98 L84 120 L76 108 L70 122 Z"/><path d="M118 100 L144 102 L148 122 L138 110 L126 122 Z"/><path d="M176 98 L204 96 L216 124 L196 108 L176 126 Z"/><path d="M204 98 L224 96 L228 118 L214 106 Z"/></g></g></svg><text x="30.0" y="259.0" font-size="5" font-weight="400" fill="#bdbdbd" textLength="30.0" lengthAdjust="spacingAndGlyphs">ESL Brains</text><text x="521.0" y="261.0" font-size="6" font-weight="400" fill="#cfcfcf" text-anchor="end">6</text></g><rect x="1.3" y="1.3" width="546.6" height="275.0" rx="7" fill="none" stroke="#474747" stroke-width="2.6"/><text x="274.6" y="373.6" font-size="42.5" font-weight="700" fill="#f4f4f4" text-anchor="middle">6</text></svg></div>
<div class="thumb" style="left:218.75px;top:137.75px"><svg class="sl" width="560" height="400" viewBox="0 0 560 400" font-family="Liberation Sans, sans-serif"><g clip-path="url(#cp)"><rect x="0.0" y="0.0" width="552.0" height="280.0" fill="#2b2b2b"/><rect x="29.0" y="0.0" width="82.0" height="75.6" fill="#333"/><rect x="377.0" y="0.0" width="175.0" height="280.0" fill="#383838"/><text x="58.6" y="54.0" font-size="23" font-weight="700" fill="#fff" textLength="151.0" lengthAdjust="spacingAndGlyphs" stroke="#fff" stroke-width="1.1" stroke-linejoin="round">VOCABULARY</text><text x="58.6" y="67.5" font-size="9" font-weight="700" fill="#fff" textLength="193.0" lengthAdjust="spacingAndGlyphs">Match the definitions with the correct words.</text><text x="58.6" y="100.5" font-size="7" font-weight="700" fill="#e8e8e8">1.</text><text x="70.0" y="100.5" font-size="7" font-weight="700" fill="#e8e8e8" textLength="77.0" lengthAdjust="spacingAndGlyphs">Body parts near the tummy</text><text x="58.6" y="115.3" font-size="7" font-weight="700" fill="#e8e8e8">2.</text><text x="70.0" y="115.3" font-size="7" font-weight="700" fill="#e8e8e8" textLength="128.0" lengthAdjust="spacingAndGlyphs">Slowly extend part longer for your muscles</text><text x="58.6" y="130.2" font-size="7" font-weight="700" fill="#e8e8e8">3.</text><text x="70.0" y="130.2" font-size="7" font-weight="700" fill="#e8e8e8" textLength="217.0" lengthAdjust="spacingAndGlyphs">Treatment or an activity to make or restore well again after damage</text><text x="58.6" y="145.1" font-size="7" font-weight="700" fill="#e8e8e8">4.</text><text x="70.0" y="145.1" font-size="7" font-weight="700" fill="#e8e8e8" textLength="105.0" lengthAdjust="spacingAndGlyphs">Being trustable or sure of success</text><text x="58.6" y="159.9" font-size="7" font-weight="700" fill="#e8e8e8">5.</text><text x="70.0" y="159.9" font-size="7" font-weight="700" fill="#e8e8e8" textLength="113.0" lengthAdjust="spacingAndGlyphs">Not able suffered some painful damage</text><text x="58.6" y="174.8" font-size="7" font-weight="700" fill="#e8e8e8">6.</text><text x="70.0" y="174.8" font-size="7" font-weight="700" fill="#e8e8e8" textLength="148.0" lengthAdjust="spacingAndGlyphs">Ways that you sit and stand, arranged correctly</text><text x="58.6" y="189.6" font-size="7" font-weight="700" fill="#e8e8e8">7.</text><text x="70.0" y="189.6" font-size="7" font-weight="700" fill="#e8e8e8" textLength="162.0" lengthAdjust="spacingAndGlyphs">Sportsmen or women that run, swimming and do fitness</text><text x="58.6" y="204.4" font-size="7" font-weight="700" fill="#e8e8e8">8.</text><text x="70.0" y="204.4" font-size="7" font-weight="700" fill="#e8e8e8" textLength="183.0" lengthAdjust="spacingAndGlyphs">Overstretch? Pulled, tired muscles/hurt part with a heavy</text><text x="58.6" y="219.3" font-size="7" font-weight="700" fill="#e8e8e8">9.</text><text x="70.0" y="219.3" font-size="7" font-weight="700" fill="#e8e8e8" textLength="148.0" lengthAdjust="spacingAndGlyphs">Ability to go on for as long as needed, not give up</text><text x="58.6" y="234.2" font-size="7" font-weight="700" fill="#e8e8e8">10.</text><text x="70.0" y="234.2" font-size="7" font-weight="700" fill="#e8e8e8" textLength="38.0" lengthAdjust="spacingAndGlyphs">Kind, careful</text><text x="423.6" y="99.0" font-size="8.6" font-weight="700" fill="#fff" textLength="19.0" lengthAdjust="spacingAndGlyphs">core</text><text x="423.6" y="114.2" font-size="8.6" font-weight="700" fill="#fff" textLength="31.0" lengthAdjust="spacingAndGlyphs">stretch</text><text x="423.6" y="129.4" font-size="8.6" font-weight="700" fill="#fff" textLength="29.0" lengthAdjust="spacingAndGlyphs">gentle</text><text x="423.6" y="144.6" font-size="8.6" font-weight="700" fill="#fff" textLength="49.0" lengthAdjust="spacingAndGlyphs">rehabilitated</text><text x="423.6" y="159.8" font-size="8.6" font-weight="700" fill="#fff" textLength="25.0" lengthAdjust="spacingAndGlyphs">strain</text><text x="423.6" y="175.0" font-size="8.6" font-weight="700" fill="#fff" textLength="43.0" lengthAdjust="spacingAndGlyphs">confident</text><text x="423.6" y="190.2" font-size="8.6" font-weight="700" fill="#fff" textLength="31.0" lengthAdjust="spacingAndGlyphs">injured</text><text x="423.6" y="205.4" font-size="8.6" font-weight="700" fill="#fff" textLength="82.0" lengthAdjust="spacingAndGlyphs">endurance/condition</text><text x="423.6" y="220.6" font-size="8.6" font-weight="700" fill="#fff" textLength="35.0" lengthAdjust="spacingAndGlyphs">athletes</text><text x="423.6" y="235.8" font-size="8.6" font-weight="700" fill="#fff" textLength="33.0" lengthAdjust="spacingAndGlyphs">posture</text><text x="30.0" y="259.0" font-size="5" font-weight="400" fill="#bdbdbd" textLength="30.0" lengthAdjust="spacingAndGlyphs">ESL Brains</text><text x="521.0" y="261.0" font-size="6" font-weight="400" fill="#cfcfcf" text-anchor="end">7</text></g><rect x="1.3" y="1.3" width="546.6" height="275.0" rx="7" fill="none" stroke="#474747" stroke-width="2.6"/><text x="274.6" y="373.6" font-size="42.5" font-weight="700" fill="#f4f4f4" text-anchor="middle">7</text></svg></div>
<div class="thumb" style="left:392.75px;top:137.75px"><svg class="sl" width="560" height="400" viewBox="0 0 560 400" font-family="Liberation Sans, sans-serif"><g clip-path="url(#cp)"><rect x="0.0" y="0.0" width="552.0" height="280.0" fill="#2b2b2b"/><text x="48.6" y="52.0" font-size="24" font-weight="700" fill="#fff" textLength="102.5" lengthAdjust="spacingAndGlyphs" stroke="#fff" stroke-width="1.1" stroke-linejoin="round">READING</text><text x="48.6" y="82.5" font-size="11.5" font-weight="700" fill="#fff" textLength="112.0" lengthAdjust="spacingAndGlyphs">The Origin of Pilates</text><text x="48.6" y="106.0" font-size="7.2" font-weight="700" fill="#ececec" textLength="251.0" lengthAdjust="spacingAndGlyphs">One of the most effective forms of total body exercise, you move through a full range,</text><text x="48.6" y="117.2" font-size="7.2" font-weight="700" fill="#ececec" textLength="253.0" lengthAdjust="spacingAndGlyphs">was invented by a man determined, as a sick boy, to be strong. Joseph Hubertus Pilates</text><text x="48.6" y="128.4" font-size="7.2" font-weight="700" fill="#ececec" textLength="235.0" lengthAdjust="spacingAndGlyphs">was a German weak and sick child with asthma, rickets and fever. But by studying</text><text x="48.6" y="139.6" font-size="7.2" font-weight="700" fill="#ececec" textLength="258.0" lengthAdjust="spacingAndGlyphs">anatomy he rebuilt his body, and later a series of exercises to help those who could not</text><text x="48.6" y="150.8" font-size="7.2" font-weight="700" fill="#ececec" textLength="216.0" lengthAdjust="spacingAndGlyphs">move, to gain strength without bearing weight and be well and fit.</text><text x="48.6" y="171.0" font-size="7.2" font-weight="700" fill="#ececec" textLength="236.0" lengthAdjust="spacingAndGlyphs">The history of Pilates begins with a German. Pilates was a man taken to</text><text x="48.6" y="182.2" font-size="7.2" font-weight="700" fill="#ececec" textLength="245.0" lengthAdjust="spacingAndGlyphs">camp on the Isle of Man. As an intern, he was asked to teach and train many injured</text><text x="48.6" y="193.4" font-size="7.2" font-weight="700" fill="#ececec" textLength="260.0" lengthAdjust="spacingAndGlyphs">soldiers and to work with those too hurt to sit or stand. He worked with them</text><text x="48.6" y="204.6" font-size="7.2" font-weight="700" fill="#ececec" textLength="253.0" lengthAdjust="spacingAndGlyphs">against resistance, pulling the springs from their hospital beds, and made it clear</text><text x="48.6" y="215.8" font-size="7.2" font-weight="700" fill="#ececec" textLength="216.0" lengthAdjust="spacingAndGlyphs">how those who worked hard recovered and became stronger.</text><svg x="334.0" y="27.5" width="167.6" height="214.0" viewBox="0 0 168 214" preserveAspectRatio="none" overflow="hidden"><defs><linearGradient id="g8" x1="0" y1="0" x2="0" y2="1"><stop offset="0" stop-color="#587a93"/><stop offset=".8" stop-color="#7090a6"/><stop offset=".84" stop-color="#86a2b5"/><stop offset="1" stop-color="#93adbe"/></linearGradient></defs>
<rect width="168" height="214" fill="url(#g8)"/>
<g filter="url(#bl1)">
<rect x="0" y="135" width="67" height="11" fill="#f4f6f8"/><rect x="0" y="146" width="64" height="4" fill="#9fb5c5"/>
<ellipse cx="98" cy="25" rx="12" ry="12" fill="#2a1c16"/><ellipse cx="90" cy="30" rx="6.5" ry="8" fill="#c89272"/>
<path d="M84 54 L106 54 L110 98 L88 104 L82 76 Z" fill="#f3f3f3"/>
<path d="M92 40 L98 56" stroke="#c89272" stroke-width="8"/>
<path d="M86 62 L68 72 L55 66" stroke="#d9a888" stroke-width="7" fill="none" stroke-linecap="round" stroke-linejoin="round"/>
<path d="M107 60 L126 88 L138 102" stroke="#d9a888" stroke-width="6" fill="none" stroke-linecap="round"/>
<path d="M96 96 L62 88 L60 112 L64 130" stroke="#f3f3f3" stroke-width="15" fill="none" stroke-linecap="round" stroke-linejoin="round"/>
<path d="M104 100 L126 140 L147 176" stroke="#f1f1f1" stroke-width="12" fill="none" stroke-linecap="round"/>
<ellipse cx="66" cy="133" rx="11" ry="4.5" fill="#fafafa"/><ellipse cx="150" cy="182" rx="5" ry="9" fill="#fafafa"/>
</g></svg><text x="30.0" y="259.0" font-size="5" font-weight="400" fill="#bdbdbd" textLength="30.0" lengthAdjust="spacingAndGlyphs">ESL Brains</text><text x="521.0" y="261.0" font-size="6" font-weight="400" fill="#cfcfcf" text-anchor="end">8</text></g><rect x="1.3" y="1.3" width="546.6" height="275.0" rx="7" fill="none" stroke="#474747" stroke-width="2.6"/><text x="274.6" y="373.6" font-size="42.5" font-weight="700" fill="#f4f4f4" text-anchor="middle">8</text></svg></div>
<div class="thumb" style="left:566.95px;top:137.75px"><svg class="sl" width="560" height="400" viewBox="0 0 560 400" font-family="Liberation Sans, sans-serif"><g clip-path="url(#cp)"><rect x="0.0" y="0.0" width="552.0" height="280.0" fill="#2b2b2b"/><svg x="28.0" y="24.6" width="196.4" height="215.0" viewBox="0 0 196 215" preserveAspectRatio="none" overflow="hidden"><defs><radialGradient id="g9" cx=".35" cy=".4" r=".8"><stop offset="0" stop-color="#d4d4d4"/><stop offset=".6" stop-color="#c6c6c6"/><stop offset="1" stop-color="#adadad"/></radialGradient></defs>
<rect width="196" height="215" fill="url(#g9)"/>
<g filter="url(#bl1)">
<path d="M58 204 L100 194 L120 198 L84 213 Z" fill="#f4f4f4"/>
<path d="M107 112 L97 150 L84 198" stroke="#b0b0b0" stroke-width="15" fill="none" stroke-linecap="round"/>
<path d="M107 112 L97 150 L84 198" stroke="#d0d0d0" stroke-width="10" fill="none" stroke-linecap="round"/>
<ellipse cx="119" cy="30" rx="11" ry="12" fill="#3c3c3c"/><ellipse cx="126" cy="35" rx="6.5" ry="8.5" fill="#a2a2a2"/>
<path d="M117 46 L121 62" stroke="#a6a6a6" stroke-width="9"/>
<path d="M106 62 L128 62 L120 112 L100 122 L94 100 Z" fill="#ededed"/>
<path d="M126 64 L152 100 L162 114" stroke="#a8a8a8" stroke-width="7" fill="none" stroke-linecap="round"/>
<path d="M120 68 L148 104 L158 116" stroke="#c8c8c8" stroke-width="5" fill="none" stroke-linecap="round"/>
<path d="M162 110 L196 106 L196 118 L166 120 Z" fill="#f8f8f8"/>
</g></svg><text x="258.4" y="39.8" font-size="12" font-weight="700" fill="#fff" textLength="153.5" lengthAdjust="spacingAndGlyphs">Bed Springs to the Reformer</text><text x="258.4" y="65.5" font-size="7.2" font-weight="700" fill="#ececec" textLength="196.0" lengthAdjust="spacingAndGlyphs">During World War I, Joseph was living in England and was</text><text x="258.4" y="76.7" font-size="7.2" font-weight="700" fill="#ececec" textLength="228.0" lengthAdjust="spacingAndGlyphs">interned on the Isle of Man. While there he began devising</text><text x="258.4" y="87.9" font-size="7.2" font-weight="700" fill="#ececec" textLength="227.0" lengthAdjust="spacingAndGlyphs">ways to keep healthy and fit, even in bed without equipment. He</text><text x="258.4" y="99.1" font-size="7.2" font-weight="700" fill="#ececec" textLength="229.0" lengthAdjust="spacingAndGlyphs">would rig springs to the beds so patients could exercise against</text><text x="258.4" y="110.3" font-size="7.2" font-weight="700" fill="#ececec" textLength="204.0" lengthAdjust="spacingAndGlyphs">resistance, an idea that led to the later invention of the reformer.</text><text x="258.4" y="121.5" font-size="7.2" font-weight="700" fill="#ececec" textLength="216.0" lengthAdjust="spacingAndGlyphs">As the name suggests, the reformer is an apparatus to reform</text><text x="258.4" y="132.7" font-size="7.2" font-weight="700" fill="#ececec" textLength="164.0" lengthAdjust="spacingAndGlyphs">one’s body, to carry Pilates’ practice today.</text><text x="258.4" y="153.5" font-size="7.2" font-weight="700" fill="#ececec" textLength="215.0" lengthAdjust="spacingAndGlyphs">After the war, Joseph moved to New York City and opened</text><text x="258.4" y="164.7" font-size="7.2" font-weight="700" fill="#ececec" textLength="230.0" lengthAdjust="spacingAndGlyphs">the first Pilates studio, which was frequented mainly by dancers and</text><text x="258.4" y="175.9" font-size="7.2" font-weight="700" fill="#ececec" textLength="30.0" lengthAdjust="spacingAndGlyphs">athletes.</text><text x="258.4" y="198.5" font-size="7.2" font-weight="700" fill="#ececec" textLength="224.0" lengthAdjust="spacingAndGlyphs">Today Pilates is for everyone: men and women of all ages,</text><text x="258.4" y="209.7" font-size="7.2" font-weight="700" fill="#ececec" textLength="214.0" lengthAdjust="spacingAndGlyphs">dancers, the elderly, people who want to rehabilitate after injury, and</text><text x="258.4" y="220.9" font-size="7.2" font-weight="700" fill="#ececec" textLength="221.0" lengthAdjust="spacingAndGlyphs">people who do little exercise. It develops strength, posture, the</text><text x="258.4" y="232.1" font-size="7.2" font-weight="700" fill="#ececec" textLength="180.0" lengthAdjust="spacingAndGlyphs">core and flexibility, gently, balanced, and with precision.</text><text x="30.0" y="259.0" font-size="5" font-weight="400" fill="#bdbdbd" textLength="30.0" lengthAdjust="spacingAndGlyphs">ESL Brains</text><text x="521.0" y="261.0" font-size="6" font-weight="400" fill="#cfcfcf" text-anchor="end">9</text></g><rect x="1.3" y="1.3" width="546.6" height="275.0" rx="7" fill="none" stroke="#474747" stroke-width="2.6"/><text x="274.6" y="373.6" font-size="42.5" font-weight="700" fill="#f4f4f4" text-anchor="middle">9</text></svg></div>
<div class="thumb" style="left:740.60px;top:137.75px"><svg class="sl" width="560" height="400" viewBox="0 0 560 400" font-family="Liberation Sans, sans-serif"><g clip-path="url(#cp)"><rect x="0.0" y="0.0" width="552.0" height="280.0" fill="#2b2b2b"/><rect x="30.5" y="0.0" width="82.0" height="74.0" fill="#3b3b3b"/><text x="58.6" y="53.5" font-size="24" font-weight="700" fill="#fff" textLength="164.0" lengthAdjust="spacingAndGlyphs" stroke="#fff" stroke-width="1.1" stroke-linejoin="round">TRUE OR FALSE</text><svg x="354.5" y="37.5" width="151.2" height="201.0" viewBox="0 0 152 201" preserveAspectRatio="none" overflow="hidden"><defs><linearGradient id="g10" x1="0" y1="0" x2="1" y2="0"><stop offset="0" stop-color="#c6cad0"/><stop offset=".5" stop-color="#d4d8de"/><stop offset="1" stop-color="#dfe2e6"/></linearGradient></defs>
<rect width="152" height="201" fill="url(#g10)"/>
<g filter="url(#bl1)">
<path d="M38 0 V190 M46 0 V170" stroke="#70767e" stroke-width="3"/>
<path d="M52 0 L60 40" stroke="#3a3f46" stroke-width="3"/>
<path d="M70 30 L100 52 L122 120 L118 176 L84 168 L86 130 L60 80 Z" fill="#f5f6f8"/>
<path d="M70 34 L48 150 M84 36 L60 160" stroke="#9aa2ac" stroke-width="3" fill="none"/>
<path d="M74 30 L88 40" stroke="#c99878" stroke-width="7" stroke-linecap="round"/>
<path d="M44 172 Q70 154 100 166 L108 188 L46 192 Z" fill="#7d4a2a"/>
<path d="M96 176 L124 186 L112 196 Z" fill="#c08c68"/>
<rect x="0" y="192" width="152" height="9" fill="#b9bdc4"/>
<path d="M30 150 L40 186" stroke="#e8e8e8" stroke-width="6"/>
</g></svg><rect x="323.5" y="39.3" width="63.3" height="105.4" fill="#3e3e3e"/><text x="60.0" y="115.0" font-size="7.2" font-weight="700" fill="#eee">1.</text><text x="72.0" y="115.0" font-size="7.2" font-weight="700" fill="#eee" textLength="136.0" lengthAdjust="spacingAndGlyphs">Joseph Pilates was born in Germany.</text><text x="60.0" y="131.7" font-size="7.2" font-weight="700" fill="#eee">2.</text><text x="72.0" y="131.7" font-size="7.2" font-weight="700" fill="#eee" textLength="145.0" lengthAdjust="spacingAndGlyphs">Pilates moved to the Isle of Man voluntarily.</text><text x="60.0" y="148.3" font-size="7.2" font-weight="700" fill="#eee">3.</text><text x="72.0" y="148.3" font-size="7.2" font-weight="700" fill="#eee" textLength="153.5" lengthAdjust="spacingAndGlyphs">Joseph started to try some type of exercises.</text><text x="60.0" y="164.9" font-size="7.2" font-weight="700" fill="#eee">4.</text><text x="72.0" y="164.9" font-size="7.2" font-weight="700" fill="#eee" textLength="215.0" lengthAdjust="spacingAndGlyphs">He invented Pilates for the 1st time in New York during the war.</text><text x="60.0" y="181.6" font-size="7.2" font-weight="700" fill="#eee">5.</text><text x="72.0" y="181.6" font-size="7.2" font-weight="700" fill="#eee" textLength="227.0" lengthAdjust="spacingAndGlyphs">Joseph opened his first Pilates studio in London after the war.</text><text x="60.0" y="198.2" font-size="7.2" font-weight="700" fill="#eee">6.</text><text x="72.0" y="198.2" font-size="7.2" font-weight="700" fill="#eee" textLength="209.0" lengthAdjust="spacingAndGlyphs">Pilates improves well-being, fitness and posture of all ages.</text><text x="30.0" y="259.0" font-size="5" font-weight="400" fill="#bdbdbd" textLength="30.0" lengthAdjust="spacingAndGlyphs">ESL Brains</text><text x="521.0" y="261.0" font-size="6" font-weight="400" fill="#cfcfcf" text-anchor="end">10</text></g><rect x="1.3" y="1.3" width="546.6" height="275.0" rx="7" fill="none" stroke="#474747" stroke-width="2.6"/><text x="274.6" y="373.6" font-size="42.5" font-weight="700" fill="#f4f4f4" text-anchor="middle">10</text></svg></div>
<div class="thumb" style="left:45.50px;top:257.90px"><svg class="sl" width="560" height="400" viewBox="0 0 560 400" font-family="Liberation Sans, sans-serif"><g clip-path="url(#cp)"><rect x="0.0" y="0.0" width="552.0" height="280.0" fill="#2b2b2b"/><rect x="29.0" y="0.0" width="82.0" height="112.5" fill="#3b3b3b"/><text x="58.0" y="54.0" font-size="24" font-weight="700" fill="#fff" textLength="130.7" lengthAdjust="spacingAndGlyphs" stroke="#fff" stroke-width="1.1" stroke-linejoin="round">QUESTIONS</text><rect x="269.0" y="39.5" width="69.0" height="24.0" fill="#3a3a3a"/><text x="303.5" y="54.5" font-size="8" font-weight="700" fill="#d8d8d8" text-anchor="middle">1</text><rect x="338.5" y="103.5" width="69.0" height="24.0" fill="#3a3a3a"/><text x="373.0" y="118.5" font-size="8" font-weight="700" fill="#d8d8d8" text-anchor="middle">2</text><rect x="269.0" y="166.0" width="69.0" height="24.0" fill="#3a3a3a"/><text x="303.5" y="181.0" font-size="8" font-weight="700" fill="#d8d8d8" text-anchor="middle">3</text><rect x="338.5" y="229.0" width="69.0" height="24.0" fill="#3a3a3a"/><text x="373.0" y="244.0" font-size="8" font-weight="700" fill="#d8d8d8" text-anchor="middle">4</text><text x="354.5" y="47.5" font-size="8.6" font-weight="700" fill="#fff" textLength="133.0" lengthAdjust="spacingAndGlyphs">Why did Joseph Pilates want</text><text x="354.5" y="60.0" font-size="8.6" font-weight="700" fill="#fff" textLength="98.0" lengthAdjust="spacingAndGlyphs">to become healthier?</text><text x="324.6" y="111.5" font-size="8.6" font-weight="700" fill="#fff" text-anchor="end" textLength="115.0" lengthAdjust="spacingAndGlyphs">Where was Joseph living</text><text x="324.6" y="124.3" font-size="8.6" font-weight="700" fill="#fff" text-anchor="end" textLength="95.0" lengthAdjust="spacingAndGlyphs">during World War I?</text><text x="354.5" y="174.0" font-size="8.6" font-weight="700" fill="#fff" textLength="142.0" lengthAdjust="spacingAndGlyphs">What everyday object inspired</text><text x="354.5" y="186.5" font-size="8.6" font-weight="700" fill="#fff" textLength="106.0" lengthAdjust="spacingAndGlyphs">the reformer machine?</text><text x="324.6" y="243.0" font-size="8.6" font-weight="700" fill="#fff" text-anchor="end" textLength="139.0" lengthAdjust="spacingAndGlyphs">Why is Pilates popular today?</text><text x="30.0" y="259.0" font-size="5" font-weight="400" fill="#bdbdbd" textLength="30.0" lengthAdjust="spacingAndGlyphs">ESL Brains</text><text x="521.0" y="261.0" font-size="6" font-weight="400" fill="#cfcfcf" text-anchor="end">11</text></g><rect x="1.3" y="1.3" width="546.6" height="275.0" rx="7" fill="none" stroke="#474747" stroke-width="2.6"/><text x="274.6" y="373.6" font-size="42.5" font-weight="700" fill="#f4f4f4" text-anchor="middle">11</text></svg></div>
<div class="thumb" style="left:218.75px;top:257.90px"><svg class="sl" width="560" height="400" viewBox="0 0 560 400" font-family="Liberation Sans, sans-serif"><g clip-path="url(#cp)"><rect x="0.0" y="0.0" width="552.0" height="280.0" fill="#2b2b2b"/><rect x="29.0" y="0.0" width="86.0" height="91.0" fill="#343434"/><text x="58.6" y="54.0" font-size="24" font-weight="700" fill="#fff" textLength="98.4" lengthAdjust="spacingAndGlyphs" stroke="#fff" stroke-width="1.1" stroke-linejoin="round">TIMELINE</text><text x="58.6" y="69.5" font-size="9" font-weight="700" fill="#fff" textLength="139.0" lengthAdjust="spacingAndGlyphs">Read the events and place them</text><text x="58.6" y="81.5" font-size="9" font-weight="700" fill="#fff" textLength="112.0" lengthAdjust="spacingAndGlyphs">in the correct order (1–7).</text><svg x="387.4" y="0.0" width="129.0" height="215.6" viewBox="0 0 130 216" preserveAspectRatio="none" overflow="hidden"><rect width="130" height="216" fill="#e3e3e5"/>
<g filter="url(#bl1)">
<rect x="0" y="198" width="130" height="18" fill="#d2d2d4"/>
<path d="M62 30 L76 36 L92 92 L106 146" stroke="#d5d9df" stroke-width="19" fill="none" stroke-linecap="round" stroke-linejoin="round"/>
<path d="M34 30 L62 22 L68 46 L42 54 Z" fill="#f4f4f4"/>
<path d="M22 60 L40 40 L58 44 L60 74 L24 76 Z" fill="#b58262"/>
<path d="M17 40 Q20 28 36 30 L46 36 L42 70 Q30 76 20 68 Z" fill="#35231b"/>
<path d="M24 70 L21 118 M58 70 L61 118" stroke="#b98565" stroke-width="7" stroke-linecap="round"/>
<rect x="19" y="120" width="52" height="84" fill="#b77642"/>
<rect x="17" y="116" width="56" height="6" fill="#2a221e"/>
<path d="M54 138 V198" stroke="#e8e4e0" stroke-width="2.5"/>
<path d="M71 172 L108 168 L108 204 L71 204 Z" fill="#a96b3d"/>
<path d="M88 166 L110 160 L112 170 L90 176 Z" fill="#e9e9e9"/>
<ellipse cx="103" cy="150" rx="5" ry="7" fill="#b98565"/>
<path d="M104 158 L120 156 L122 166 L108 170 Z" fill="#242220"/>
<ellipse cx="14" cy="201" rx="5" ry="4" fill="#333"/>
</g></svg><path d="M58.6 119.0 h13" stroke="#bbb" stroke-width="1.2"/><text x="75.0" y="118.0" font-size="7" font-weight="700" fill="#e8e8e8" textLength="269.6" lengthAdjust="spacingAndGlyphs">Joseph was frail and sick, but he read and trained to become well and strong.</text><path d="M58.6 133.8 h13" stroke="#bbb" stroke-width="1.2"/><text x="75.0" y="132.8" font-size="7" font-weight="700" fill="#e8e8e8" textLength="256.0" lengthAdjust="spacingAndGlyphs">Pilates became popular with people for fitness, posture and recovery from the injuries.</text><path d="M58.6 148.5 h13" stroke="#bbb" stroke-width="1.2"/><text x="75.0" y="147.5" font-size="7" font-weight="700" fill="#e8e8e8" textLength="205.0" lengthAdjust="spacingAndGlyphs">Joseph opened the first Pilates studio in New York City.</text><path d="M58.6 163.2 h13" stroke="#bbb" stroke-width="1.2"/><text x="75.0" y="162.2" font-size="7" font-weight="700" fill="#e8e8e8" textLength="302.0" lengthAdjust="spacingAndGlyphs">He studied skiing, self-defence, body-building, gymnastics, yoga, boxing and other skills.</text><path d="M58.6 178.0 h13" stroke="#bbb" stroke-width="1.2"/><text x="75.0" y="177.0" font-size="7" font-weight="700" fill="#e8e8e8" textLength="167.0" lengthAdjust="spacingAndGlyphs">Joseph Pilates was born in Germany in 1883.</text><path d="M58.6 192.8 h13" stroke="#bbb" stroke-width="1.2"/><text x="75.0" y="191.8" font-size="7" font-weight="700" fill="#e8e8e8" textLength="152.0" lengthAdjust="spacingAndGlyphs">He moved to New York after World War I.</text><path d="M58.6 207.5 h13" stroke="#bbb" stroke-width="1.2"/><text x="75.0" y="206.5" font-size="7" font-weight="700" fill="#e8e8e8" textLength="281.0" lengthAdjust="spacingAndGlyphs">Pilates was interned on the Isle of Man, in England, during the First World War.</text><text x="30.0" y="259.0" font-size="5" font-weight="400" fill="#bdbdbd" textLength="30.0" lengthAdjust="spacingAndGlyphs">ESL Brains</text><text x="521.0" y="261.0" font-size="6" font-weight="400" fill="#cfcfcf" text-anchor="end">12</text></g><rect x="1.3" y="1.3" width="546.6" height="275.0" rx="7" fill="none" stroke="#474747" stroke-width="2.6"/><text x="274.6" y="373.6" font-size="42.5" font-weight="700" fill="#f4f4f4" text-anchor="middle">12</text></svg></div>
<div class="thumb" style="left:392.75px;top:257.90px"><svg class="sl" width="560" height="400" viewBox="0 0 560 400" font-family="Liberation Sans, sans-serif"><g clip-path="url(#cp)"><rect x="0.0" y="0.0" width="552.0" height="280.0" fill="#2b2b2b"/><rect x="29.0" y="0.0" width="82.0" height="74.0" fill="#3b3b3b"/><text x="58.6" y="54.5" font-size="24" font-weight="700" fill="#fff" textLength="161.5" lengthAdjust="spacingAndGlyphs" stroke="#fff" stroke-width="1.1" stroke-linejoin="round">ODD ONE OUT</text><text x="356.0" y="43.5" font-size="8.6" font-weight="700" fill="#fff" textLength="150.0" lengthAdjust="spacingAndGlyphs">Look at each group of words and</text><text x="356.0" y="56.2" font-size="8.6" font-weight="700" fill="#fff" textLength="141.0" lengthAdjust="spacingAndGlyphs">find the one that doesn’t belong.</text><rect x="27.4" y="102.0" width="116.6" height="55.5" fill="none" stroke="#a0a0a0" stroke-width="2.1" rx="1"/><text x="41.6" y="116.6" font-size="7" font-weight="700" fill="#eee">A.</text><text x="53.0" y="116.6" font-size="7" font-weight="700" fill="#eee" textLength="14.0" lengthAdjust="spacingAndGlyphs">chin</text><text x="41.6" y="127.8" font-size="7" font-weight="700" fill="#eee">B.</text><text x="53.0" y="127.8" font-size="7" font-weight="700" fill="#eee" textLength="17.0" lengthAdjust="spacingAndGlyphs">knee</text><text x="41.6" y="139.0" font-size="7" font-weight="700" fill="#eee">C.</text><text x="53.0" y="139.0" font-size="7" font-weight="700" fill="#eee" textLength="68.0" lengthAdjust="spacingAndGlyphs">reformer machine</text><text x="41.6" y="150.2" font-size="7" font-weight="700" fill="#eee">D.</text><text x="53.0" y="150.2" font-size="7" font-weight="700" fill="#eee" textLength="19.0" lengthAdjust="spacingAndGlyphs">chest</text><rect x="155.0" y="102.0" width="116.0" height="55.5" fill="none" stroke="#a0a0a0" stroke-width="2.1" rx="1"/><text x="169.2" y="116.6" font-size="7" font-weight="700" fill="#eee">A.</text><text x="180.6" y="116.6" font-size="7" font-weight="700" fill="#eee" textLength="24.0" lengthAdjust="spacingAndGlyphs">gentle</text><text x="169.2" y="127.8" font-size="7" font-weight="700" fill="#eee">B.</text><text x="180.6" y="127.8" font-size="7" font-weight="700" fill="#eee" textLength="38.0" lengthAdjust="spacingAndGlyphs">energetic</text><text x="169.2" y="139.0" font-size="7" font-weight="700" fill="#eee">C.</text><text x="180.6" y="139.0" font-size="7" font-weight="700" fill="#eee" textLength="17.0" lengthAdjust="spacingAndGlyphs">calm</text><text x="169.2" y="150.2" font-size="7" font-weight="700" fill="#eee">D.</text><text x="180.6" y="150.2" font-size="7" font-weight="700" fill="#eee" textLength="20.0" lengthAdjust="spacingAndGlyphs">quiet</text><rect x="283.0" y="102.0" width="116.0" height="55.5" fill="none" stroke="#a0a0a0" stroke-width="2.1" rx="1"/><text x="297.2" y="116.6" font-size="7" font-weight="700" fill="#eee">A.</text><text x="308.6" y="116.6" font-size="7" font-weight="700" fill="#eee" textLength="27.0" lengthAdjust="spacingAndGlyphs">athlete</text><text x="297.2" y="127.8" font-size="7" font-weight="700" fill="#eee">B.</text><text x="308.6" y="127.8" font-size="7" font-weight="700" fill="#eee" textLength="30.0" lengthAdjust="spacingAndGlyphs">dancer</text><text x="297.2" y="139.0" font-size="7" font-weight="700" fill="#eee">C.</text><text x="308.6" y="139.0" font-size="7" font-weight="700" fill="#eee" textLength="29.0" lengthAdjust="spacingAndGlyphs">gymnast</text><text x="297.2" y="150.2" font-size="7" font-weight="700" fill="#eee">D.</text><text x="308.6" y="150.2" font-size="7" font-weight="700" fill="#eee" textLength="31.0" lengthAdjust="spacingAndGlyphs">reformer</text><rect x="410.0" y="102.0" width="116.0" height="55.5" fill="none" stroke="#a0a0a0" stroke-width="2.1" rx="1"/><text x="424.2" y="116.6" font-size="7" font-weight="700" fill="#eee">A.</text><text x="435.6" y="116.6" font-size="7" font-weight="700" fill="#eee" textLength="39.0" lengthAdjust="spacingAndGlyphs">exhausted</text><text x="424.2" y="127.8" font-size="7" font-weight="700" fill="#eee">B.</text><text x="435.6" y="127.8" font-size="7" font-weight="700" fill="#eee" textLength="18.0" lengthAdjust="spacingAndGlyphs">fresh</text><text x="424.2" y="139.0" font-size="7" font-weight="700" fill="#eee">C.</text><text x="435.6" y="139.0" font-size="7" font-weight="700" fill="#eee" textLength="18.0" lengthAdjust="spacingAndGlyphs">weak</text><text x="424.2" y="150.2" font-size="7" font-weight="700" fill="#eee">D.</text><text x="435.6" y="150.2" font-size="7" font-weight="700" fill="#eee" textLength="36.0" lengthAdjust="spacingAndGlyphs">confident</text><rect x="27.4" y="168.0" width="116.6" height="55.5" fill="none" stroke="#a0a0a0" stroke-width="2.1" rx="1"/><text x="41.6" y="182.6" font-size="7" font-weight="700" fill="#eee">A.</text><text x="53.0" y="182.6" font-size="7" font-weight="700" fill="#eee" textLength="30.0" lengthAdjust="spacingAndGlyphs">posture</text><text x="41.6" y="193.8" font-size="7" font-weight="700" fill="#eee">B.</text><text x="53.0" y="193.8" font-size="7" font-weight="700" fill="#eee" textLength="20.0" lengthAdjust="spacingAndGlyphs">heart</text><text x="41.6" y="205.0" font-size="7" font-weight="700" fill="#eee">C.</text><text x="53.0" y="205.0" font-size="7" font-weight="700" fill="#eee" textLength="19.0" lengthAdjust="spacingAndGlyphs">lungs</text><text x="41.6" y="216.2" font-size="7" font-weight="700" fill="#eee">D.</text><text x="53.0" y="216.2" font-size="7" font-weight="700" fill="#eee" textLength="18.0" lengthAdjust="spacingAndGlyphs">brain</text><rect x="155.0" y="168.0" width="116.0" height="55.5" fill="none" stroke="#a0a0a0" stroke-width="2.1" rx="1"/><text x="169.2" y="182.6" font-size="7" font-weight="700" fill="#eee">A.</text><text x="180.6" y="182.6" font-size="7" font-weight="700" fill="#eee" textLength="27.0" lengthAdjust="spacingAndGlyphs">injured</text><text x="169.2" y="193.8" font-size="7" font-weight="700" fill="#eee">B.</text><text x="180.6" y="193.8" font-size="7" font-weight="700" fill="#eee" textLength="28.0" lengthAdjust="spacingAndGlyphs">relaxed</text><text x="169.2" y="205.0" font-size="7" font-weight="700" fill="#eee">C.</text><text x="180.6" y="205.0" font-size="7" font-weight="700" fill="#eee" textLength="15.0" lengthAdjust="spacingAndGlyphs">hurt</text><text x="169.2" y="216.2" font-size="7" font-weight="700" fill="#eee">D.</text><text x="180.6" y="216.2" font-size="7" font-weight="700" fill="#eee" textLength="14.0" lengthAdjust="spacingAndGlyphs">sore</text><rect x="283.0" y="168.0" width="116.0" height="55.5" fill="none" stroke="#a0a0a0" stroke-width="2.1" rx="1"/><text x="297.2" y="182.6" font-size="7" font-weight="700" fill="#eee">A.</text><text x="308.6" y="182.6" font-size="7" font-weight="700" fill="#eee" textLength="25.0" lengthAdjust="spacingAndGlyphs">stretch</text><text x="297.2" y="193.8" font-size="7" font-weight="700" fill="#eee">B.</text><text x="308.6" y="193.8" font-size="7" font-weight="700" fill="#eee" textLength="17.0" lengthAdjust="spacingAndGlyphs">bend</text><text x="297.2" y="205.0" font-size="7" font-weight="700" fill="#eee">C.</text><text x="308.6" y="205.0" font-size="7" font-weight="700" fill="#eee" textLength="11.0" lengthAdjust="spacingAndGlyphs">run</text><text x="297.2" y="216.2" font-size="7" font-weight="700" fill="#eee">D.</text><text x="308.6" y="216.2" font-size="7" font-weight="700" fill="#eee" textLength="19.0" lengthAdjust="spacingAndGlyphs">yawn</text><rect x="410.0" y="168.0" width="116.0" height="55.5" fill="none" stroke="#a0a0a0" stroke-width="2.1" rx="1"/><text x="424.2" y="182.6" font-size="7" font-weight="700" fill="#eee">A.</text><text x="435.6" y="182.6" font-size="7" font-weight="700" fill="#eee" textLength="16.0" lengthAdjust="spacingAndGlyphs">basic</text><text x="424.2" y="193.8" font-size="7" font-weight="700" fill="#eee">B.</text><text x="435.6" y="193.8" font-size="7" font-weight="700" fill="#eee" textLength="22.0" lengthAdjust="spacingAndGlyphs">strong</text><text x="424.2" y="205.0" font-size="7" font-weight="700" fill="#eee">C.</text><text x="435.6" y="205.0" font-size="7" font-weight="700" fill="#eee" textLength="35.0" lengthAdjust="spacingAndGlyphs">powerful</text><text x="424.2" y="216.2" font-size="7" font-weight="700" fill="#eee">D.</text><text x="435.6" y="216.2" font-size="7" font-weight="700" fill="#eee" textLength="35.0" lengthAdjust="spacingAndGlyphs">energetic</text><text x="30.0" y="259.0" font-size="5" font-weight="400" fill="#bdbdbd" textLength="30.0" lengthAdjust="spacingAndGlyphs">ESL Brains</text><text x="521.0" y="261.0" font-size="6" font-weight="400" fill="#cfcfcf" text-anchor="end">13</text></g><rect x="1.3" y="1.3" width="546.6" height="275.0" rx="7" fill="none" stroke="#474747" stroke-width="2.6"/><text x="274.6" y="373.6" font-size="42.5" font-weight="700" fill="#f4f4f4" text-anchor="middle">13</text></svg></div>
<div class="thumb" style="left:566.95px;top:257.90px"><svg class="sl" width="560" height="400" viewBox="0 0 560 400" font-family="Liberation Sans, sans-serif"><g clip-path="url(#cp)"><rect x="0.0" y="0.0" width="552.0" height="280.0" fill="#2b2b2b"/><svg x="0.0" y="0.0" width="228.5" height="207.0" viewBox="0 0 229 207" preserveAspectRatio="none" overflow="hidden"><defs><linearGradient id="g14" x1="0" y1="0" x2="0" y2="1"><stop offset="0" stop-color="#d2e5ea"/><stop offset=".38" stop-color="#e2eef0"/><stop offset=".42" stop-color="#dfe6e6"/><stop offset=".58" stop-color="#e8ecea"/><stop offset=".6" stop-color="#2a96d0"/><stop offset="1" stop-color="#1680bc"/></linearGradient></defs>
<rect width="229" height="207" fill="url(#g14)"/>
<g filter="url(#bl1)">
<path d="M0 82 L22 78 L40 84 L60 86 L60 92 L0 94 Z" fill="#77786a"/>
<ellipse cx="77" cy="75" rx="9" ry="6" fill="#5e605c"/>
<path d="M23 82 V26 Q24 10 42 8 L70 5" stroke="#f2f5f6" stroke-width="3" fill="none"/>
<path d="M58 3 L80 2 L78 10 L60 11 Z" fill="#d4867a"/>
<path d="M0 126 L229 122 L229 207 L0 207 Z" fill="#1f8fcb"/>
<path d="M0 156 Q80 170 150 180 Q190 176 229 190 M0 196 Q100 200 150 180 Q176 164 180 140" stroke="#f2f7fa" stroke-width="4.5" fill="none"/>
<path d="M70 92 L52 112 L40 134 M74 96 L92 128 L100 150" stroke="#d6e7dd" stroke-width="21" fill="none" stroke-linecap="round" stroke-linejoin="round"/>
<path d="M96 150 L130 162 L158 164" stroke="#d3e5db" stroke-width="13" fill="none" stroke-linecap="round"/>
<path d="M84 78 L124 76 L128 96 L92 100 Z" fill="#bf8a7c"/>
<path d="M134 84 Q134 72 150 72 Q168 72 170 88 Q170 104 154 106 Q138 104 134 84 Z" fill="#33221c"/>
<ellipse cx="171" cy="78" rx="6" ry="6" fill="#33221c"/>
<path d="M105 92 L107 170 M138 100 L140 138" stroke="#d6a488" stroke-width="7" stroke-linecap="round"/>
<path d="M158 170 L168 140 L178 146 L170 176 Z" fill="#f2f2f2"/><ellipse cx="24" cy="138" rx="6" ry="11" fill="#f0f0f0"/>
</g></svg><rect x="184.6" y="0.0" width="86.7" height="111.3" fill="#3c3c3c"/><text x="287.0" y="54.0" font-size="24" font-weight="700" fill="#fff" textLength="139.6" lengthAdjust="spacingAndGlyphs" stroke="#fff" stroke-width="1.1" stroke-linejoin="round">HOMEWORK</text><text x="287.0" y="78.0" font-size="9.5" font-weight="700" fill="#fff" textLength="154.0" lengthAdjust="spacingAndGlyphs">Choose one trendy sport or activity:</text><text x="287.0" y="91.5" font-size="7" font-weight="700" fill="#eee">•</text><text x="296.5" y="91.5" font-size="6.8" font-weight="400" fill="#e8e8e8" textLength="29.0" lengthAdjust="spacingAndGlyphs">Zumba®</text><text x="378.5" y="91.5" font-size="7" font-weight="700" fill="#eee">•</text><text x="387.4" y="91.5" font-size="6.8" font-weight="400" fill="#e8e8e8" textLength="24.0" lengthAdjust="spacingAndGlyphs">Barre</text><text x="287.0" y="103.4" font-size="7" font-weight="700" fill="#eee">•</text><text x="296.5" y="103.4" font-size="6.8" font-weight="400" fill="#e8e8e8" textLength="27.0" lengthAdjust="spacingAndGlyphs">Parkour</text><text x="378.5" y="103.4" font-size="7" font-weight="700" fill="#eee">•</text><text x="387.4" y="103.4" font-size="6.8" font-weight="400" fill="#e8e8e8" textLength="18.0" lengthAdjust="spacingAndGlyphs">HIIT</text><text x="287.0" y="115.3" font-size="7" font-weight="700" fill="#eee">•</text><text x="296.5" y="115.3" font-size="6.8" font-weight="400" fill="#e8e8e8" textLength="32.0" lengthAdjust="spacingAndGlyphs">Hot Yoga</text><text x="378.5" y="115.3" font-size="7" font-weight="700" fill="#eee">•</text><text x="387.4" y="115.3" font-size="6.8" font-weight="400" fill="#e8e8e8" textLength="29.0" lengthAdjust="spacingAndGlyphs">Zorbing</text><text x="287.0" y="127.2" font-size="7" font-weight="700" fill="#eee">•</text><text x="296.5" y="127.2" font-size="6.8" font-weight="700" fill="#e8e8e8" textLength="25.0" lengthAdjust="spacingAndGlyphs">Fencing</text><text x="378.5" y="127.2" font-size="7" font-weight="700" fill="#eee">•</text><text x="387.4" y="127.2" font-size="6.8" font-weight="700" fill="#e8e8e8" textLength="46.0" lengthAdjust="spacingAndGlyphs">Aerial Yoga</text><text x="287.0" y="162.5" font-size="9.5" font-weight="700" fill="#fff" textLength="165.0" lengthAdjust="spacingAndGlyphs">Research a few facts about its history:</text><text x="287.0" y="175.5" font-size="7" font-weight="700" fill="#eee">1.</text><text x="297.7" y="175.5" font-size="7" font-weight="400" fill="#eaeaea" textLength="63.0" lengthAdjust="spacingAndGlyphs">Where did it start?</text><text x="287.0" y="187.5" font-size="7" font-weight="700" fill="#eee">2.</text><text x="297.7" y="187.5" font-size="7" font-weight="400" fill="#eaeaea" textLength="131.0" lengthAdjust="spacingAndGlyphs">Who started it or made it popular?</text><text x="287.0" y="200.0" font-size="7" font-weight="700" fill="#eee">3.</text><text x="297.7" y="200.0" font-size="7" font-weight="400" fill="#eaeaea" textLength="110.0" lengthAdjust="spacingAndGlyphs">Where was it first done and by?</text><text x="287.0" y="212.3" font-size="7" font-weight="700" fill="#eee">4.</text><text x="297.7" y="212.3" font-size="7" font-weight="700" fill="#eaeaea" textLength="194.0" lengthAdjust="spacingAndGlyphs">What do people do/use because of it? Does your country...</text><text x="287.0" y="225.2" font-size="7" font-weight="700" fill="#eee">5.</text><text x="297.7" y="225.2" font-size="7" font-weight="700" fill="#eaeaea" textLength="186.0" lengthAdjust="spacingAndGlyphs">What is it that people/teachers and people who use,</text><text x="297.7" y="236.3" font-size="7" font-weight="700" fill="#eaeaea" textLength="125.0" lengthAdjust="spacingAndGlyphs">know that will help to use, avoid mess!</text><text x="30.0" y="259.0" font-size="5" font-weight="400" fill="#bdbdbd" textLength="30.0" lengthAdjust="spacingAndGlyphs">ESL Brains</text><text x="521.0" y="261.0" font-size="6" font-weight="400" fill="#cfcfcf" text-anchor="end">14</text></g><rect x="1.3" y="1.3" width="546.6" height="275.0" rx="7" fill="none" stroke="#474747" stroke-width="2.6"/><text x="274.6" y="373.6" font-size="42.5" font-weight="700" fill="#f4f4f4" text-anchor="middle">14</text></svg></div>
<div class="thumb" style="left:740.60px;top:257.90px"><svg class="sl" width="560" height="400" viewBox="0 0 560 400" font-family="Liberation Sans, sans-serif"><g clip-path="url(#cp)"><rect x="0.0" y="0.0" width="552.0" height="280.0" fill="#2b2b2b"/><rect x="29.0" y="26.0" width="185.0" height="165.6" fill="#393939"/><text x="161.0" y="113.0" font-size="35" font-weight="700" fill="#f2f2f2" textLength="325.0" lengthAdjust="spacingAndGlyphs" stroke="#f2f2f2" stroke-width="1.4">ANY QUESTIONS?</text><text x="30.5" y="259.0" font-size="5" font-weight="400" fill="#cfcfcf" textLength="31.0" lengthAdjust="spacingAndGlyphs">ESL Brains</text></g><rect x="1.3" y="1.3" width="546.6" height="275.0" rx="7" fill="none" stroke="#474747" stroke-width="2.6"/><text x="274.6" y="373.6" font-size="42.5" font-weight="700" fill="#f4f4f4" text-anchor="middle">15</text></svg></div>
</div><!--endcontent-->
<svg style="position:absolute;left:540px;top:313px" width="20" height="20" viewBox="584 340 20 20"><path d="M589.7 345.8 V355.3 L592 353.3 L593.7 357.1 L595.6 356.3 L594 352.7 L597.1 352.5 Z" fill="#141414" stroke="#c4c4c4" stroke-width="1.05" stroke-linejoin="round"/></svg>
 <div class="gutter"></div>
<div class="edge"></div>
</div>
</div>
</body>
</html>
